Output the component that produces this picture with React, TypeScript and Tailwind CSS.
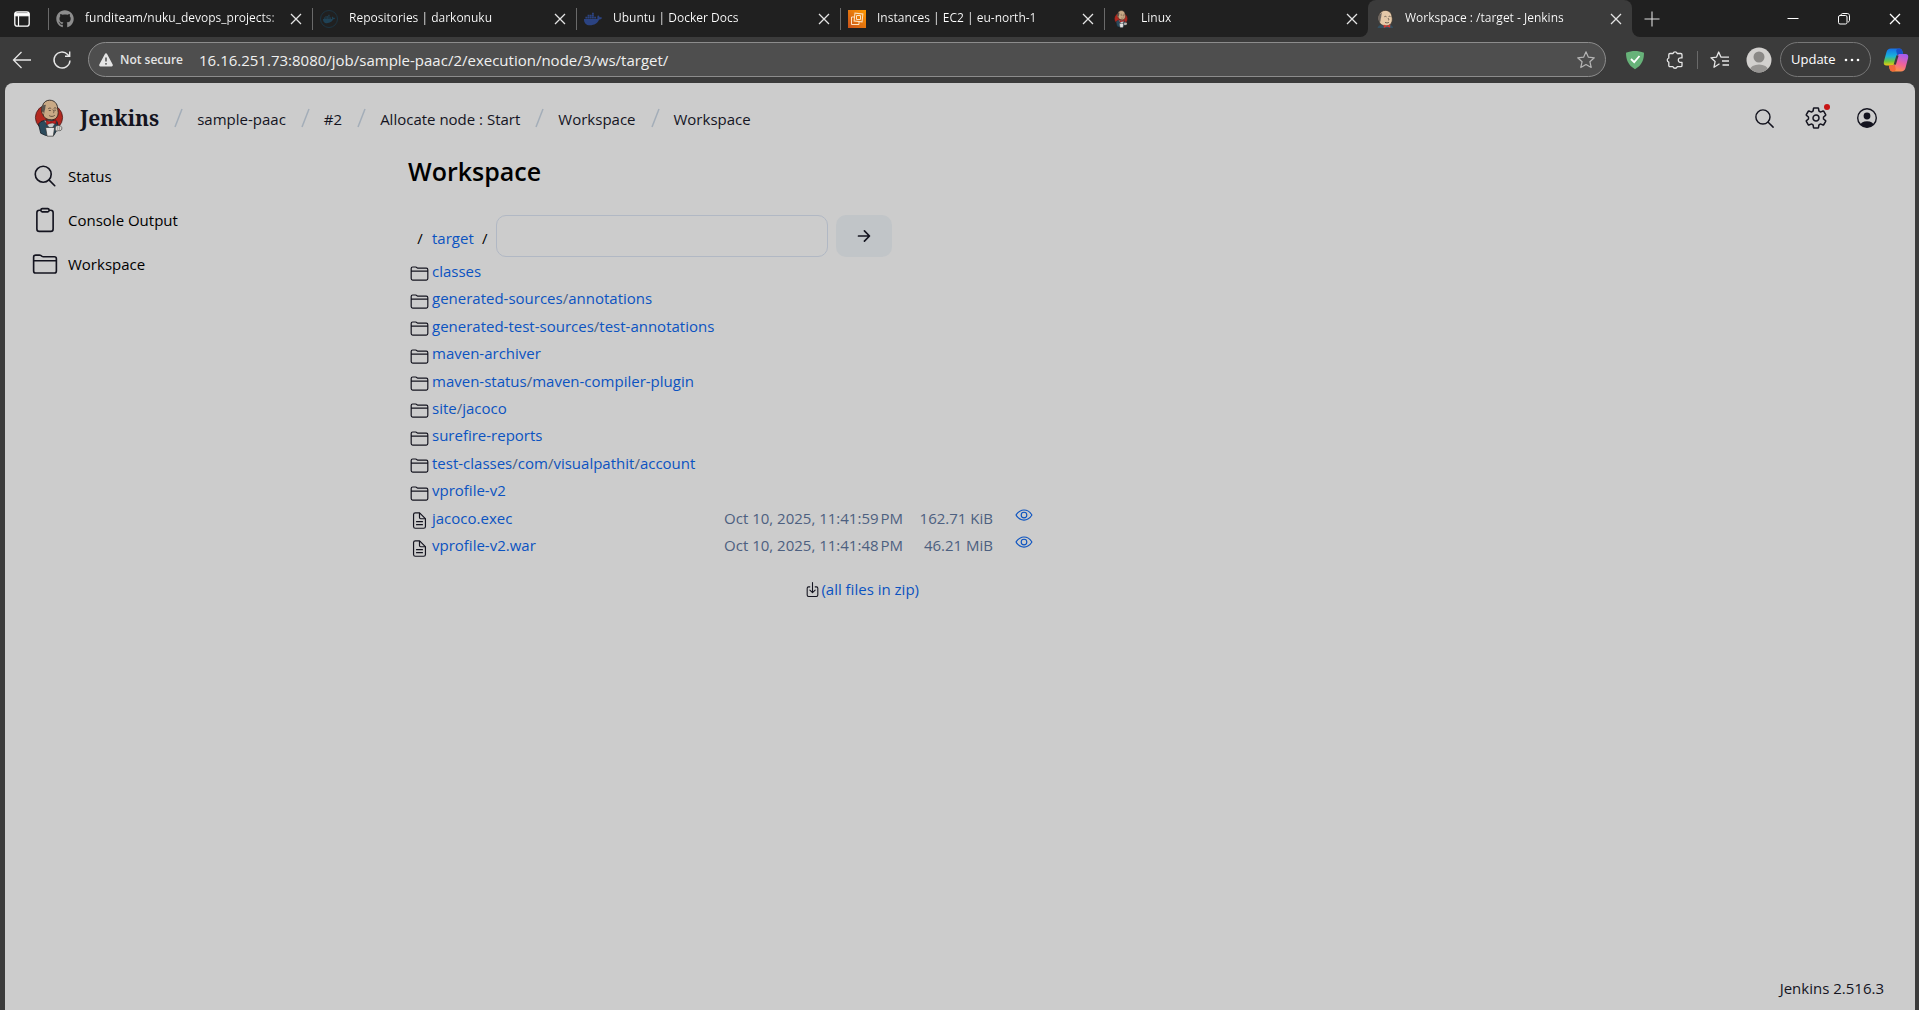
import type { ReactNode } from "react";
import { FaDocker, FaGithub } from "react-icons/fa";
import {
  IoArrowForwardOutline,
  IoClipboardOutline,
  IoDocumentTextOutline,
  IoDownloadOutline,
  IoEyeOutline,
  IoFolderOutline,
  IoSearchOutline,
  IoSettingsOutline,
} from "react-icons/io5";

function JenkinsLogo({ className }: { className: string }) {
  return (
    <svg viewBox="0 0 30 38" className={className} aria-hidden="true">
      <ellipse cx="15" cy="18.5" rx="13.6" ry="13" fill="#b3281f" stroke="#4a1c1a" strokeWidth="0.8" />
      <path d="M7 22.5 4.5 25l2.2 9.2 5 2.3h8l2.6-4.5 2.2-4-1.5-5.5-5-1.5H12z" fill="#2b4a5c" stroke="#152028" strokeWidth="0.8" />
      <path d="M10 21.5 17 31l5.5-9z" fill="#c9cbcb" stroke="#2a2f33" strokeWidth="0.4" />
      <path d="M8.6 6.6C9.6 3 12.4 1.2 15.6 1.2c4.8 0 7.8 3.4 8 8 .1 1.400.6 2.700.6 4.300 0 4.500-2.800 7.300-6.700 7.300-4.400 0-8-1.900-8.800-6.300-1.300-1.600-1.500-5.200-.100-7.900z" fill="#c9a985" stroke="#2a2420" strokeWidth="0.9" />
      <path d="M9 6.200C7.400 8 7 11 8.400 14.300l1.600.9c.6-1.900.3-3.200 1-4.800.6-1.500.1-3 1-4.600z" fill="#5b554f" />
      <path d="M9.500 12.800c-.9-1.200-2-.3-1.500 1.200.4 1.100 1.200 1.600 1.900 1.300" fill="#c9a985" stroke="#3a2d25" strokeWidth="0.6" />
      <path d="M14.200 9.800c.9-.9 2.200-.9 3-.2M19.700 9.400c.8-.7 2-.7 2.700 0M18.800 10.500c.9 1.500 1.900 2.700.4 3.500M14.800 11.500h2M20.200 11.200h1.700M15.200 16.600c1.800 1.200 4 1.100 5.600-.3" fill="none" stroke="#3a2d25" strokeWidth="0.7" />
      <path d="m12 21.200 4.700 1.800 5-2.300.5 4.300-4.800-1.200-4.800 2z" fill="#c5201d" stroke="#4b1111" strokeWidth="0.5" />
      <circle cx="17" cy="23.200" r="1.300" fill="#a01916" />
      <path d="M11.600 28.500h9l-1.300 8.700h-6.200z" fill="#e2e2e2" stroke="#333" strokeWidth="0.7" />
      <path d="M21.500 27.500c2.700-1.800 6-.9 6.300 1.200.5 2.300-1.300 3.400-3.300 2.900-1.600.8-3.300.2-3.300-1.400z" fill="#d7d4cf" stroke="#333" strokeWidth="0.6" />
      <path d="M23.700 27.500v3.600M25.500 27.300v3.600" stroke="#555" strokeWidth="0.4" />
    </svg>
  );
}

function JenkinsHead({ className }: { className: string }) {
  return (
    <svg viewBox="0 0 18 18" className={className} aria-hidden="true">
      <path d="M1.500 18c.3-2 2-3.200 4.200-3.600h7.500c2.300.3 3.600 1.500 3.900 3.600z" fill="#335061" />
      <path d="M3 5.500C3.800 2 6.400.4 9.300.4c4 0 6.500 2.800 6.600 6.500.6 1 .4 3 .2 4.300-.6 3-3 4.700-6.300 4.700-3.400 0-6.300-1.600-6.800-5.300C1.800 9 2 7 3 5.500z" fill="#e6c9a8" stroke="#3b332d" strokeWidth="0.7" />
      <path d="M3 5C1.700 7 1.800 9.600 3.200 11.800l1.300-.4c.2-1.500 0-2.500.6-3.900C5.600 6 5.100 4.500 6.200 2z" fill="#6d6660" />
      <path d="M8.300 6.800c.7-.6 1.600-.6 2.200 0M12.600 6.600c.6-.5 1.400-.4 1.900 0M12 8c.7 1.200 1.300 1.900.3 2.400M9 12.400c1.500.7 3 .6 4-.2" fill="none" stroke="#3b332d" strokeWidth="0.7" />
      <path d="m7.800 14.600 3 1.500 3.400-1.700v3.300l-3.200-1.100-3.200 1.300z" fill="#d33833" />
    </svg>
  );
}

function Ec2Icon() {
  return (
    <svg viewBox="0 0 18 18" className="size-[18px]" aria-hidden="true">
      <defs>
        <linearGradient id="ec2" x1="0" y1="1" x2="1" y2="0">
          <stop offset="0" stopColor="#c8511b" />
          <stop offset="1" stopColor="#f90" />
        </linearGradient>
      </defs>
      <path d="M0 0h18v18H0z" fill="url(#ec2)" />
      <g fill="none" stroke="#fbe3c4" strokeWidth="1">
        <path d="M6.500 3.500h8v8h-8z" transform="rotate(6 10.500 7.500)" />
        <path d="M8.500 5.500h4v4h-4z" />
        <path d="M6 7H3.500v7.500H11V12" />
      </g>
    </svg>
  );
}

function Cross({ className }: { className: string }) {
  return (
    <svg viewBox="0 0 16 16" className={className} fill="none" stroke="currentColor" aria-hidden="true">
      <path d="m3 3 10 10M13 3 3 13" strokeWidth="1.300" />
    </svg>
  );
}

const starPath = "m10 1.800 2.400 5.400 5.900.6-4.400 3.900 1.300 5.800-5.200-3-5.200 3 1.300-5.800L1.700 7.800l5.900-.6z";

type TabData = { title: string; icon: ReactNode };

const tabs: TabData[] = [
  { title: "funditeam/nuku_devops_projects:", icon: <FaGithub className="size-[18px] text-[#8d8d8d]" /> },
  {
    title: "Repositories | darkonuku",
    icon: (
      <span className="flex size-[18px] items-center justify-center rounded-full border border-[#1c3442]">
        <FaDocker className="size-3 text-[#1f4256]" />
      </span>
    ),
  },
  { title: "Ubuntu | Docker Docs", icon: <FaDocker className="size-[18px] text-[#2b4382]" /> },
  { title: "Instances | EC2 | eu-north-1", icon: <Ec2Icon /> },
  { title: "Linux", icon: <JenkinsLogo className="size-[18px]" /> },
];

function Tab({ title, icon, active = false }: TabData & { active?: boolean }) {
  return (
    <div
      className={
        active
          ? "flex h-full w-[264px] items-center rounded-t-lg bg-[#3b3b3b] px-2"
          : "flex h-full w-[264px] min-w-0 items-center px-2"
      }
    >
      <span className="flex w-[29px] shrink-0">{icon}</span>
      <button className="min-w-0 flex-1 bg-linear-to-r from-white from-90% to-[#888888] bg-clip-text pb-0.5 text-left text-xs leading-5 whitespace-nowrap text-transparent">
        {title}
      </button>
      <button aria-label={`Close ${title}`} className="ml-1 shrink-0 text-[#e4e4e4]">
        <Cross className="size-4" />
      </button>
    </div>
  );
}

function TabStrip() {
  return (
    <div className="flex h-[37px] text-white">
      <div className="flex items-center rounded-br-lg bg-[#202020]">
        <button aria-label="Tab actions" className="flex w-12 justify-center pr-1">
          <svg viewBox="0 0 18 18" className="size-[18px]" fill="none" stroke="#fff" aria-hidden="true">
            <rect x="1.800" y="1.800" width="14.400" height="14.400" rx="2.500" strokeWidth="1.300" />
            <path d="M2 3.200h14v2.600H2z" fill="#fff" />
            <path d="M5.500 6v10" strokeWidth="1.200" />
          </svg>
        </button>
        {tabs.map((tab) => (
          <div key={tab.title} className="flex h-full items-center">
            <span className="-mr-px h-[22px] w-px bg-[#6a6a6a]" />
            <Tab {...tab} />
          </div>
        ))}
      </div>
      <div className="bg-[#202020]">
        <Tab title="Workspace : /target - Jenkins" icon={<JenkinsHead className="size-[18px]" />} active />
      </div>
      <div className="flex flex-1 items-center justify-between rounded-bl-lg bg-[#202020] pr-4 pl-3">
        <button aria-label="New tab">
          <svg viewBox="0 0 16 16" className="size-4" stroke="#ddd" strokeWidth="1.100" aria-hidden="true">
            <path d="M8 .5v15M.5 8h15" />
          </svg>
        </button>
        <div className="flex gap-[35px]">
          <button aria-label="Minimize">
            <svg viewBox="0 0 16 16" className="size-4" stroke="#fff" aria-hidden="true">
              <path d="M2.500 7.500h11" />
            </svg>
          </button>
          <button aria-label="Restore">
            <svg viewBox="0 0 16 16" className="size-4" fill="none" stroke="#fff" aria-hidden="true">
              <rect x="2.500" y="4.500" width="8.500" height="8.500" rx="1.500" />
              <path d="M5 4.200c0-1 .7-1.700 1.700-1.700h4.600c1.300 0 2.200.9 2.200 2.200v4.600c0 1-.7 1.700-1.700 1.700" />
            </svg>
          </button>
          <button aria-label="Close window">
            <Cross className="size-4" />
          </button>
        </div>
      </div>
    </div>
  );
}

function CopilotIcon() {
  return (
    <svg viewBox="0 0 26 26" className="size-[26px]" aria-hidden="true">
      <defs>
        <linearGradient id="cpBlue" x1="0" y1="0" x2="0" y2="1">
          <stop offset="0" stopColor="#1670e8" />
          <stop offset="0.450" stopColor="#18b2dc" />
          <stop offset="0.750" stopColor="#6cc63f" />
          <stop offset="1" stopColor="#f2ca12" />
        </linearGradient>
        <linearGradient id="cpPink" x1="0.700" y1="0" x2="0.300" y2="1">
          <stop offset="0" stopColor="#a35df0" />
          <stop offset="0.500" stopColor="#f0619c" />
          <stop offset="1" stopColor="#ff9a3c" />
        </linearGradient>
      </defs>
      <path d="M8 1.500h8.500c1.500 0 2.400 1 2.800 2.400l.9 3.100h-3.400c-1.700 0-2.500.9-3 2.500L12 15.500c-.6 2-1.400 3-3.300 3H3.500C1.300 18.500.300 17 .9 14.500L3.500 5c.6-2.300 2-3.500 4.500-3.500z" fill="url(#cpBlue)" />
      <path d="M18 24.500H9.500c-1.500 0-2.400-1-2.800-2.400l-.9-3.600h3.400c1.700 0 2.500-.9 3-2.500l1.800-6.500c.6-2 1.400-2.500 3.300-2.500h5.200c2.200 0 3.200 1.500 2.600 4L22.500 21c-.6 2.300-2 3.500-4.500 3.500z" fill="url(#cpPink)" />
      <path d="M16.500 1.500c1.500 0 2.400 1 2.800 2.400l.9 3.100h-3.400c-1.300 0-2.100.5-2.600 1.500l-.9-4.500c-.3-1.500.6-2.500 3.200-2.500z" fill="#1a4fc9" />
      <path d="M9.500 24.500c-1.500 0-2.400-1-2.800-2.400l-.9-3.600h3.400c1.300 0 2.100-.5 2.600-1.500l.9 5c.3 1.500-.6 2.500-3.200 2.500z" fill="#f4693a" />
      <path d="m14.500 8.500-2.700 9" stroke="#3b3b3b" strokeWidth="2.200" />
    </svg>
  );
}

function Toolbar() {
  return (
    <div className="flex h-[46px] items-center pr-2.5 pb-px pl-3 text-white">
      <button aria-label="Back">
        <svg viewBox="0 0 20 20" className="size-5" fill="none" stroke="#e6e6e6" strokeWidth="1.300" aria-hidden="true">
          <path d="M19 10H1.500M9.500 2 1.500 10l8 8" />
        </svg>
      </button>
      <button aria-label="Refresh" className="ml-5">
        <svg viewBox="0 0 20 20" className="size-5" fill="none" stroke="#e6e6e6" strokeWidth="1.400" aria-hidden="true">
          <path d="M18 10.500a8 8 0 1 1-2.300-6.100L17.500 6M17.700 1.500V6.300H13" />
        </svg>
      </button>
      <div className="ml-4 flex h-[35px] flex-1 items-center rounded-full border border-[#8c8c8c] bg-[#4e4e4e] px-[9px]">
        <button className="flex items-center gap-1.5 text-xs font-semibold text-[#e4e4e4]">
          <svg viewBox="0 0 16 16" className="size-4" aria-hidden="true">
            <path d="M8 1.300c.5 0 .9.200 1.100.7l5.600 10.600c.4.900-.1 1.900-1.100 1.900H2.400c-1 0-1.500-1-1.100-1.900L6.900 2c.2-.5.600-.7 1.100-.7z" fill="#e4e4e4" />
            <path d="M8 5.500v4" stroke="#4e4e4e" strokeWidth="1.500" />
            <circle cx="8" cy="11.800" r="0.900" fill="#4e4e4e" />
          </svg>
          Not secure
        </button>
        <input
          aria-label="Address"
          defaultValue="16.16.251.73:8080/job/sample-paac/2/execution/node/3/ws/target/"
          className="ml-4 min-w-0 flex-1 bg-transparent text-[15px] leading-6 text-[#f0f0f0] outline-none"
        />
        <button aria-label="Add to favorites">
          <svg viewBox="0 0 20 20" className="size-5" fill="none" stroke="#b5b5b5" strokeWidth="1.200" strokeLinejoin="round" aria-hidden="true">
            <path d={starPath} />
          </svg>
        </button>
      </div>
      <button aria-label="Ad blocker" className="ml-[19px]">
        <svg viewBox="0 0 20 20" className="size-5" aria-hidden="true">
          <path d="M10 1c2.700 0 6 .6 9 1.800 0 7-2 12.500-9 16.400C3 15.300 1 9.800 1 2.800 4 1.600 7.300 1 10 1z" fill="#67b279" />
          <path d="m6 9 3.200 3.200L14.500 6" fill="none" stroke="#fff" strokeWidth="1.800" />
        </svg>
      </button>
      <button aria-label="Extensions" className="ml-5">
        <svg viewBox="0 0 20 20" className="size-5" fill="none" stroke="#e6e6e6" strokeWidth="1.300" strokeLinejoin="round" aria-hidden="true">
          <path d="M8 3.500a2.200 2.200 0 0 1 4.200 0h3.600c.7 0 1.200.5 1.200 1.200v3.200c-2.600-.5-3.700.7-3.700 2.200s1.100 2.700 3.700 2.200v3.200c0 .7-.5 1.200-1.200 1.200h-3.600a2.200 2.200 0 0 1-4.200 0H5c-.7 0-1.200-.5-1.200-1.200v-3.300a2.200 2.200 0 0 1 0-4.200V4.700c0-.7.5-1.200 1.200-1.200z" />
        </svg>
      </button>
      <span className="ml-3 h-[18px] w-px bg-[#6a6a6a]" />
      <button aria-label="Favorites" className="ml-3">
        <svg viewBox="0 0 20 20" className="size-5" fill="none" stroke="#e6e6e6" strokeWidth="1.300" strokeLinejoin="round" aria-hidden="true">
          <path d="M9.500 13.800 4 17.200l1.100-5.700L1 7.800l5.600-.7L8.700 2l2.200 5.100H19M12 11h7M12.500 15H19" />
        </svg>
      </button>
      <button aria-label="Profile" className="ml-4">
        <svg viewBox="0 0 26 26" className="size-[26px]" aria-hidden="true">
          <clipPath id="avatar">
            <circle cx="13" cy="13" r="12.500" />
          </clipPath>
          <g clipPath="url(#avatar)">
            <path d="M0 0h26v26H0z" fill="#d2d0ce" />
            <circle cx="13" cy="10" r="5.500" fill="#8a8886" />
            <ellipse cx="13" cy="23" rx="9" ry="5.500" fill="#979593" />
          </g>
        </svg>
      </button>
      <button className="ml-2 flex h-[35px] w-[91px] items-center justify-between rounded-full border border-[#777] px-2.5 text-[13px]">
        Update
        <svg viewBox="0 0 16 16" className="size-4" fill="#fff" aria-hidden="true">
          <circle cx="2" cy="8" r="1.300" />
          <circle cx="8" cy="8" r="1.300" />
          <circle cx="14" cy="8" r="1.300" />
        </svg>
      </button>
      <button aria-label="Copilot" className="ml-3">
        <CopilotIcon />
      </button>
    </div>
  );
}

const crumbs = ["sample-paac", "#2", "Allocate node : Start", "Workspace", "Workspace"];

function Header() {
  return (
    <header className="flex h-[70px] items-center pr-[37px] pl-[29px]">
      <a href="#home" className="flex items-center gap-4">
        <JenkinsLogo className="h-[38px] w-[30px]" />
        <span className="font-['Noto_Serif',serif] text-[21px] leading-6 font-bold">Jenkins</span>
      </a>
      <nav aria-label="Breadcrumb" className="flex">
        {crumbs.map((crumb, i) => (
          <div key={i} className="flex items-center">
            <svg viewBox="0 0 38 20" className="h-5 w-[38px]" stroke="#a3adb8" strokeWidth="1.500" aria-hidden="true">
              <path d="m16 19 7-18" />
            </svg>
            <a href="#crumb" className="pt-0.5 text-[15px] leading-6">
              {crumb}
            </a>
          </div>
        ))}
      </nav>
      <div className="ml-auto flex items-center gap-7">
        <button aria-label="Search">
          <IoSearchOutline className="size-[23px]" />
        </button>
        <button aria-label="Manage Jenkins" className="relative">
          <IoSettingsOutline className="size-6" />
          <span className="absolute -top-0.5 -right-0.5 size-1.5 rounded-full bg-[#c81414]" />
        </button>
        <button aria-label="User">
          <svg viewBox="0 0 22 22" className="size-[22px]" aria-hidden="true">
            <clipPath id="user">
              <circle cx="11" cy="11" r="9.300" />
            </clipPath>
            <circle cx="11" cy="11" r="9.300" fill="none" stroke="currentColor" strokeWidth="1.400" />
            <circle cx="11" cy="9" r="3.400" fill="currentColor" />
            <ellipse cx="11" cy="18.500" rx="7" ry="4.300" fill="currentColor" clipPath="url(#user)" />
          </svg>
        </button>
      </div>
    </header>
  );
}

const sideLinks = [
  { label: "Status", Icon: IoSearchOutline },
  { label: "Console Output", Icon: IoClipboardOutline },
  { label: "Workspace", Icon: IoFolderOutline },
];

type Entry = { name: string; date?: string; size?: string };

const entries: Entry[] = [
  { name: "classes" },
  { name: "generated-sources/annotations" },
  { name: "generated-test-sources/test-annotations" },
  { name: "maven-archiver" },
  { name: "maven-status/maven-compiler-plugin" },
  { name: "site/jacoco" },
  { name: "surefire-reports" },
  { name: "test-classes/com/visualpathit/account" },
  { name: "vprofile-v2" },
  { name: "jacoco.exec", date: "Oct 10, 2025, 11:41:59\u202fPM", size: "162.71 KiB" },
  { name: "vprofile-v2.war", date: "Oct 10, 2025, 11:41:48\u202fPM", size: "46.21 MiB" },
];

function EntryName({ name }: { name: string }) {
  const parts = name.split("/");
  return (
    <>
      {parts.map((part, i) => (
        <span key={part}>
          {i > 0 && <span className="text-[#4d6080]">/</span>}
          <a href="#entry" className="text-[#0b53c1]">
            {part}
          </a>
        </span>
      ))}
    </>
  );
}

function Workspace() {
  return (
    <main className="flex-1 text-[15px] leading-5">
      <h1 className="text-[25px] leading-9 font-semibold text-black">Workspace</h1>
      <form className="mt-[26px] flex h-[42px] items-center" onSubmit={(e) => e.preventDefault()}>
        <span className="w-6 pt-1 text-center text-black">/</span>
        <a href="#target" className="pt-1 text-[#0b53c1]">
          target
        </a>
        <span className="w-[22px] pt-1 text-center text-black">/</span>
        <input
          aria-label="Path"
          className="h-full w-[332px] rounded-[10px] border border-[#b1b8c4] bg-transparent px-3 outline-none"
        />
        <button
          aria-label="Go"
          className="ml-2 flex h-full w-14 items-center justify-center rounded-[10px] bg-[#c1c5c8]"
        >
          <IoArrowForwardOutline className="size-[18px]" />
        </button>
      </form>
      <table className="h-[302px] w-[625px] table-fixed">
        <colgroup>
          <col className="w-6" />
          <col className="w-[271px]" />
          <col className="w-[200px]" />
          <col className="w-[90px]" />
          <col className="w-[40px]" />
        </colgroup>
        <tbody>
          {entries.map((entry) => (
            <tr key={entry.name}>
              <td className="pt-1.5">
                {entry.date ? (
                  <IoDocumentTextOutline className="ml-0.5 size-[19px]" />
                ) : (
                  <IoFolderOutline className="ml-0.5 size-[19px]" />
                )}
              </td>
              <td className="whitespace-nowrap">
                <EntryName name={entry.name} />
              </td>
              <td className="text-right whitespace-nowrap text-[#4d6080]">{entry.date}</td>
              <td className="text-right whitespace-nowrap text-[#4d6080]">{entry.size}</td>
              <td className="pb-1.5">
                {entry.date && (
                  <a href="#view" aria-label={`View ${entry.name}`} className="ml-auto block w-fit text-[#0b53c1]">
                    <IoEyeOutline className="size-[18px]" />
                  </a>
                )}
              </td>
            </tr>
          ))}
        </tbody>
      </table>
      <div className="mt-5 flex w-[511px] items-center justify-end">
        <IoDownloadOutline className="size-[17px]" />
        <a href="#zip" className="text-[#0b53c1]">
          (all files in zip)
        </a>
      </div>
    </main>
  );
}

export default function App() {
  return (
    <div className="flex min-h-screen flex-col bg-[#3b3b3b] font-['Open_Sans','Noto_Sans',sans-serif]">
      <TabStrip />
      <Toolbar />
      <div className="mr-1 ml-[5px] flex flex-1 flex-col rounded-t-lg bg-[#cccccc] text-[#14141f]">
        <Header />
        <div className="flex flex-1">
          <nav aria-label="Build" className="w-[403px] shrink-0 pt-px">
            {sideLinks.map(({ label, Icon }) => (
              <a
                key={label}
                href="#side"
                className="flex h-11 items-center gap-2.5 pl-[27px] text-[15px] leading-5 text-black"
              >
                <Icon className="size-[26px] text-[#14141f]" />
                {label}
              </a>
            ))}
          </nav>
          <Workspace />
        </div>
        <footer className="flex justify-end pr-[31px] pb-3">
          <a href="#version" className="text-[15px] leading-5">
            Jenkins 2.516.3
          </a>
        </footer>
      </div>
    </div>
  );
}
